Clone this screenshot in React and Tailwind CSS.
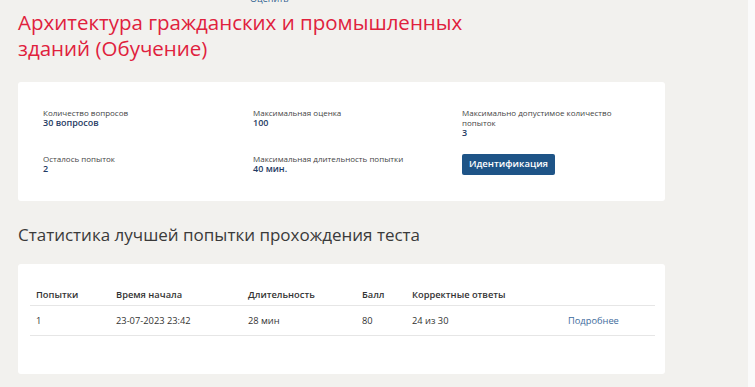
const INFO = [
  { label: 'Количество вопросов', value: '30 вопросов' },
  { label: 'Максимальная оценка', value: '100' },
  { label: 'Максимально допустимое количество попыток', value: '3', narrow: true },
  { label: 'Осталось попыток', value: '2' },
  { label: 'Максимальная длительность попытки', value: '40 мин.' },
];

const COLS = 'grid grid-cols-[80px_132px_114px_50px_156px_1fr]';

export default function App() {
  return (
    <div className="flex h-[387px] w-full overflow-hidden bg-[#f2f1ee] font-['Open_Sans',sans-serif] text-[#333]">
      <div className="flex-1 pl-[18px]">
        <div className="-mt-[7px] ml-[232px] text-[9px] leading-[12px] text-[#2f5f8f]">Оценить</div>

        <h1 className="mt-[4px] text-[20.5px] font-medium leading-[26px] text-[#e0213d]">
          Архитектура гражданских и промышленных
          <br />
          зданий (Обучение)
        </h1>

        <div className="mt-[21px] h-[119px] w-[647px] rounded-[3px] bg-white pl-[25px] pt-[26px]">
          <div className="grid grid-cols-[210px_209px_1fr] gap-y-[16px]">
            {INFO.map((item) => (
              <div key={item.label} className={item.narrow ? 'w-[165px]' : ''}>
                <div className="text-[8px] leading-[10px] text-[#444]">{item.label}</div>
                <div className="text-[9px] font-semibold leading-[10px] text-[#1f3b63]">{item.value}</div>
              </div>
            ))}
            <div>
              <button className="block h-[21px] w-[93px] rounded-[2px] bg-[#1e5487] text-[9.5px] font-semibold text-white">
                Идентификация
              </button>
            </div>
          </div>
        </div>

        <h2 className="mt-[22px] text-[17px] leading-[24px] text-[#3a3a3a]">
          Статистика лучшей попытки прохождения теста
        </h2>

        <div className="mt-[17px] h-[110px] w-[647px] rounded-[3px] bg-white pl-[12px] pr-[10px] pt-[21px]">
          <div className={`${COLS} h-[21px] items-center border-b border-[#e6e6e6] text-[9.3px] font-semibold`}>
            <div className="px-[6px]">Попытки</div>
            <div className="px-[6px]">Время начала</div>
            <div className="px-[6px]">Длительность</div>
            <div className="px-[6px]">Балл</div>
            <div className="px-[6px]">Корректные ответы</div>
            <div />
          </div>
          <div className={`${COLS} h-[30px] items-center border-b border-[#e6e6e6] text-[9.3px]`}>
            <div className="px-[6px]">1</div>
            <div className="px-[6px]">23-07-2023 23:42</div>
            <div className="px-[6px]">28 мин</div>
            <div className="px-[6px]">80</div>
            <div className="px-[6px]">24 из 30</div>
            <div className="px-[6px] text-[#3c6b9c]">Подробнее</div>
          </div>
        </div>
      </div>
      <div className="w-[7px] bg-[#fafafa]" />
    </div>
  );
}
